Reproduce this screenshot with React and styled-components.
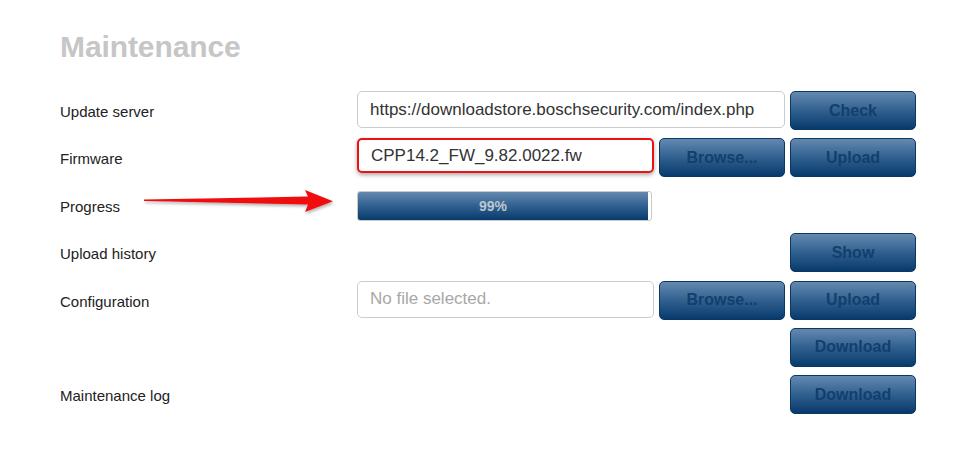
import styled, { createGlobalStyle } from 'styled-components';

const GlobalStyle = createGlobalStyle`
  body {
    margin: 0;
    background: #ffffff;
    font-family: 'Liberation Sans', Arial, sans-serif;
  }
`;

const Page = styled.div`
  padding: 32px 0 0 60px;
  position: relative;
`;

const Title = styled.h1`
  margin: 0 0 29px 0;
  font-size: 30px;
  line-height: 30px;
  font-weight: bold;
  color: #c6c6c6;
  letter-spacing: -0.1px;
`;

const Row = styled.div`
  display: grid;
  grid-template-columns: 292px 297px 126px 126px;
  column-gap: 5px;
  height: 39px;
  align-items: center;
  margin-bottom: 8.4px;
  margin-top: ${(p) => (p.$extra ? '2px' : '0')};
  position: relative;
`;

const Label = styled.div`
  grid-column: 1;
  padding-top: 2px;
  font-size: 15px;
  color: #222222;
`;

const Field = styled.input`
  grid-column: ${(p) => p.$span || '2'};
  align-self: start;
  box-sizing: border-box;
  height: ${(p) => (p.$marked ? '35px' : '37px')};
  width: 100%;
  margin: 0;
  padding: 0 12px;
  font-family: 'Liberation Sans', Arial, sans-serif;
  font-size: 17px;
  color: #333333;
  background: #ffffff;
  border: ${(p) => (p.$marked ? '2px solid #ee1111' : '1px solid #cccccc')};
  border-radius: 5px;
  box-shadow: ${(p) => (p.$marked ? '0 2px 4px rgba(0, 0, 0, 0.35)' : 'none')};
  outline: none;

  &::placeholder {
    color: #a8a8a8;
  }
`;

const Button = styled.button`
  grid-column: ${(p) => p.$col};
  align-self: start;
  box-sizing: border-box;
  height: 39px;
  width: 126px;
  margin: 0;
  padding: 0;
  border: 1px solid #0b3763;
  border-radius: 5px;
  background: linear-gradient(to bottom, #6489b0 0%, #30608f 50%, #073a6c 100%);
  font-family: 'Liberation Sans', Arial, sans-serif;
  font-size: 16px;
  font-weight: bold;
  color: #123f6c;
  cursor: pointer;
`;

const Track = styled.div`
  grid-column: 2;
  box-sizing: border-box;
  width: 295px;
  height: 30px;
  margin-top: 1px;
  border: 1px solid #c9c9c9;
  border-radius: 3px;
  background: #ffffff;
  overflow: hidden;
`;

const Fill = styled.div`
  height: 100%;
  width: ${(p) => p.$pct}%;
  background: linear-gradient(to bottom, #6489b0 0%, #30608f 50%, #073a6c 100%);
  display: flex;
  align-items: center;
  justify-content: center;
  padding-right: 20px;
  box-sizing: border-box;
  font-size: 14px;
  font-weight: bold;
  color: #bcc6d1;
`;

const Arrow = styled.svg`
  position: absolute;
  left: 80px;
  top: 2px;
  overflow: visible;
`;

const RedArrow = () => (
  <Arrow width="200" height="30" viewBox="0 0 200 30">
    <defs>
      <filter id="arrowShadow" x="-10%" y="-50%" width="120%" height="200%">
        <feDropShadow dx="1" dy="2" stdDeviation="1.5" floodColor="#000" floodOpacity="0.3" />
      </filter>
    </defs>
    <polygon
      points="4,11.6 168,8.6 165,2 193,13.3 165,24 168,16.6 4,13"
      fill="#f00f0f"
      filter="url(#arrowShadow)"
    />
  </Arrow>
);

export default function App() {
  return (
    <>
      <GlobalStyle />
      <Page>
        <Title>Maintenance</Title>

        <Row>
          <Label>Update server</Label>
          <Field $span="2 / 4" readOnly value="https://downloadstore.boschsecurity.com/index.php" />
          <Button $col="4">Check</Button>
        </Row>

        <Row>
          <Label>Firmware</Label>
          <Field $marked readOnly value="CPP14.2_FW_9.82.0022.fw" />
          <Button $col="3">Browse...</Button>
          <Button $col="4">Upload</Button>
        </Row>

        <Row>
          <Label>Progress</Label>
          <RedArrow />
          <Track>
            <Fill $pct={99}>99%</Fill>
          </Track>
        </Row>

        <Row>
          <Label>Upload history</Label>
          <Button $col="4">Show</Button>
        </Row>

        <Row>
          <Label>Configuration</Label>
          <Field readOnly placeholder="No file selected." />
          <Button $col="3">Browse...</Button>
          <Button $col="4">Upload</Button>
        </Row>

        <Row>
          <Button $col="4">Download</Button>
        </Row>

        <Row $extra>
          <Label>Maintenance log</Label>
          <Button $col="4">Download</Button>
        </Row>
      </Page>
    </>
  );
}
